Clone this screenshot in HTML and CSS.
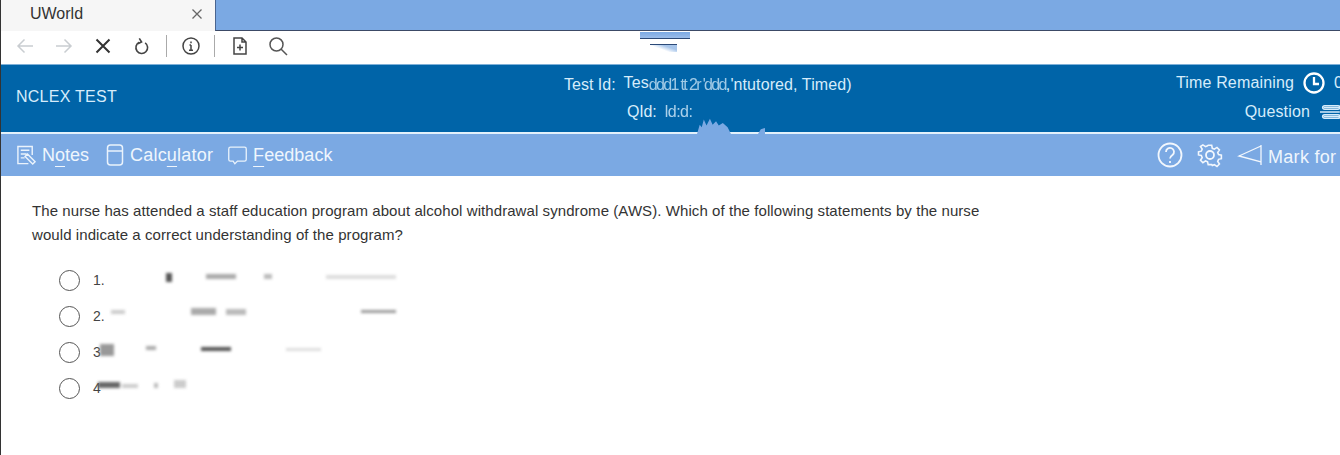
FILE: index.html
```html
<!DOCTYPE html>
<html lang="en">
<head>
<meta charset="utf-8">
<title>UWorld</title>
<link rel="stylesheet" href="styles.css">
</head>
<body>
<div class="tabstrip">
  <div class="tab"><span class="tab-title">UWorld</span>
    <svg class="tab-close" viewBox="0 0 12 12"><path d="M1.5 1.5l9 9M10.5 1.5l-9 9"/></svg>
  </div>
  <div class="tab-rest"></div>
</div>
<div class="toolbar">
  <svg class="tb tb-dim" viewBox="0 0 20 20"><path d="M18 10H3M9.500 3.500L3 10l6.500 6.500"/></svg>
  <svg class="tb tb-dim" viewBox="0 0 20 20"><path d="M2 10h15M10.500 3.500L17 10l-6.500 6.500"/></svg>
  <svg class="tb tb-x" viewBox="0 0 20 20"><path d="M3.500 3.500l13 13M16.500 3.500l-13 13"/></svg>
  <svg class="tb tb-reload" viewBox="0 0 20 20"><path d="M13.500 6.500a6.500 6.500 0 1 1-6.500-.6M7 1.500l2.500 4-4 2"/></svg>
  <span class="tb-sep"></span>
  <svg class="tb tb-info" viewBox="0 0 20 20"><circle cx="10" cy="10" r="8"/><path d="M10 9v5M8 14.200h4M8.500 9h1.500M10 5.500v1.800"/></svg>
  <span class="tb-sep sep2"></span>
  <svg class="tb tb-page" viewBox="0 0 20 20"><path d="M4 2h8l4 4v12H4zM12 2v4h4M10 8.500v6M7 11.500h6"/></svg>
  <svg class="tb tb-search" viewBox="0 0 20 20"><circle cx="8.500" cy="8.500" r="6.500"/><path d="M13 13l6 6"/></svg>
  <div class="tb-smudge"><span class="sm-a"></span><span class="sm-b"></span></div>
</div>
<header class="head">
  <div class="head-left">NCLEX TEST</div>
  <div class="head-center">
    <div class="test-line"><span>Test Id:</span><span class="test-val"><span class="tes">Tes</span><span class="garble">ddd1 tt 2r 'ddd</span>,'ntutored, Timed)</span></div>
    <div class="qid-line">QId: <span class="qid-val">ld:d:</span></div>
  </div>
  <div class="head-right">
    <div class="right-line">Time Remaining
      <svg class="clock" viewBox="0 0 24 24"><circle cx="12" cy="12" r="9.500"/><path d="M12 6v7h5"/></svg>
      <span class="clip">0</span>
    </div>
    <div class="right-line q">Question
      <svg class="qicon" viewBox="0 0 24 20"><path d="M6 5h18M2 10h22M6 15h18"/><rect x="5" y="3" width="19" height="4" rx="2"/><rect x="5" y="13" width="19" height="4" rx="2"/></svg>
    </div>
  </div>
  <span class="blob blob-a"></span>
  <span class="blob blob-b"></span>
</header>
<nav class="nav">
  <div class="nav-left">
    <a class="nav-item">
      <svg class="ni ni-notes" viewBox="0 0 22 24"><path d="M13 21H2V3h15v9M5 7h9M5 11h6M5 15h4M12 11l8 8-2.500 2.500-8-8z"/></svg>
      <span>N<u>o</u>tes</span></a>
    <a class="nav-item">
      <svg class="ni ni-calc" viewBox="0 0 18 24"><rect x="1.500" y="2" width="15" height="20" rx="3"/><path d="M1.500 8h15"/></svg>
      <span class="calc-label">Calc<u>u</u>lator</span></a>
    <a class="nav-item">
      <svg class="ni ni-wide" viewBox="0 0 24 24"><path d="M4 3h16a2 2 0 0 1 2 2v12a2 2 0 0 1-2 2H12l-3 3-2-3H4a2 2 0 0 1-2-2V5a2 2 0 0 1 2-2z"/></svg>
      <span class="fb-label"><u>F</u>eedback</span></a>
  </div>
  <div class="nav-right">
    <svg class="nr help" viewBox="0 0 26 26"><circle cx="13" cy="13" r="11.500"/><path d="M9 10a4 4 0 1 1 6.500 3c-1.500 1.100-2.500 1.800-2.500 3.500M13 19v2"/></svg>
    <svg class="nr gear" viewBox="0 0 26 26"><circle cx="13" cy="13" r="4"/><path d="M11 2h4l.7 3.500 2.300 1 3-2 2.800 2.800-2 3 1 2.300 3.200.7v4l-3.200.7-1 2.300 2 3-2.800 2.800-3-2-2.300 1L15 24h-4l-.7-3.200-2.300-1-3 2-2.800-2.800 2-3-1-2.300L0 13v-3.600l3.200-.7 1-2.300-2-3L5 1.600l3 2 2.300-1z" transform="translate(1.500 1.500) scale(.88)"/></svg>
    <svg class="nr flag" viewBox="0 0 26 22"><path d="M24 2L2 12l22 6zM24 1v20"/></svg>
    <span class="mark"><u>M</u>ark for</span>
  </div>
</nav>
<main class="content">
  <p class="question">The nurse has attended a staff education program about alcohol withdrawal syndrome (AWS). Which of the following statements by the nurse<br>would indicate a correct understanding of the program?</p>
  <ul class="options">
    <li class="opt"><span class="radio"></span><span>1.</span><span class="smudge s1"></span></li>
    <li class="opt"><span class="radio"></span><span>2.</span><span class="smudge s2"></span></li>
    <li class="opt"><span class="radio"></span><span>3</span><span class="smudge s3"></span></li>
    <li class="opt"><span class="radio"></span><span>4</span><span class="smudge s4"></span></li>
  </ul>
</main>
</body>
</html>
```
FILE: styles.css
```css
* { box-sizing: border-box; }
html, body { margin: 0; height: 100%; }
body {
  width: 1340px; height: 455px; overflow: hidden; background: #fff;
  font-family: "Liberation Sans", Arial, sans-serif; color: #333;
  border-left: 1px solid #333;
}
.tabstrip { display: flex; height: 31px; }
.tab {
  width: 214px; display: flex; align-items: center; justify-content: space-between;
  background: #f6f6f6; padding: 0 12px 3px 29px; font-size: 16px; color: #333;
}
.tab-close { width: 12px; height: 12px; fill: none; stroke: #666; stroke-width: 1.300; }
.tab-rest { flex: 1; background: #7ba9e3; border-bottom: 1px solid #3c4a66; border-left: 1px solid #4a6590; }
.toolbar { display: flex; align-items: center; height: 34px; background: #fff; padding: 0 0 3px 14px; position: relative; border-bottom: 1px solid #7eb0d8; }
.tb { width: 20px; height: 20px; fill: none; stroke-width: 1.500; flex: none; }
.tb-dim { stroke: #c9cdd1; margin-right: 19px; }
.tb-x { stroke: #333; stroke-width: 2; margin-right: 20px; }
.tb-reload { stroke: #444; stroke-width: 1.800; width: 18px; height: 18px; margin-right: 15px; }
.tb-sep { width: 1px; height: 22px; background: #aaa; margin-right: 14px; flex: none; }
.tb-info { stroke: #444; margin-right: 13px; }
.sep2 { margin-right: 15px; }
.tb-page { stroke: #444; margin-right: 18px; }
.tb-search { stroke: #555; }
.tb-smudge { margin-left: 352px; width: 50px; display: flex; flex-direction: column; align-items: center; gap: 5px; align-self: flex-start; padding-top: 1px; }
.sm-a { width: 50px; height: 7px; background: linear-gradient(#7ba9e3, #9bbdea); border-bottom: 1px solid #2c4a78; filter: blur(.5px); }
.sm-b { width: 27px; height: 8px; margin-left: -3px; border-top: 1px solid #2c4a78; background: linear-gradient(200deg, #a7c5ea 30%, transparent 60%); filter: blur(.5px); }
.head {
  height: 67px; background: #0064a8; color: #d6ecfb; display: flex; position: relative;
  justify-content: space-between; font-size: 16px;
}
.head-left { width: 563px; padding: 23px 0 0 15px; letter-spacing: .25px; }
.head-center { flex: 1; padding-top: 10px; }
.test-line { display: flex; gap: 8px; line-height: 20px; }
.test-val { letter-spacing: .1px; display: flex; white-space: pre; }
.tes { position: relative; top: -2px; }
.garble { opacity: .75; letter-spacing: -1.650px; }
.qid-line { margin: 7px 0 0 63px; line-height: 20px; letter-spacing: -.2px; }
.qid-val { opacity: .8; letter-spacing: -.5px; margin-left: 4px; }
.head-right { width: 164px; padding-top: 8px; display: flex; flex-direction: column; align-items: flex-end; overflow: hidden; flex: none; }
.right-line { display: flex; align-items: center; gap: 8px; height: 20px; white-space: nowrap; letter-spacing: .15px; }
.right-line.q { margin-top: 9px; gap: 8px; }
.clock { width: 24px; height: 24px; fill: none; stroke: #fff; stroke-width: 2.300; }
.clip { width: 6px; overflow: hidden; }
.qicon { width: 22px; height: 18px; fill: none; stroke: #d6ecfb; stroke-width: 1.800; }
.blob { position: absolute; background: #7ba9e3; }
.blob-a { left: 696px; top: 52px; width: 34px; height: 17px; clip-path: polygon(0 100%, 8% 45%, 14% 60%, 20% 15%, 28% 50%, 38% 10%, 46% 45%, 56% 25%, 64% 50%, 76% 35%, 90% 60%, 100% 100%); }
.blob-b { left: 757px; top: 63px; width: 7px; height: 6px; clip-path: polygon(0 100%, 40% 20%, 100% 0, 100% 100%); }
.nav {
  height: 44px; background: #7ba9e3; border-top: 2px solid #e3f1fb; color: #eff6fd;
  display: flex; justify-content: space-between; align-items: center; font-size: 18px;
}
.nav-left { display: flex; gap: 16px; padding-left: 15px; }
.nav-item { display: flex; align-items: center; gap: 5px; }
.ni { height: 24px; fill: none; stroke: #eaf3fc; stroke-width: 1.500; }
.ni-notes { width: 21px; }
.ni-calc { width: 18px; margin-left: 1px; }
.ni-wide { width: 21px; margin-left: -2px; }
.calc-label { margin-left: 1px; letter-spacing: .2px; }
.fb-label { letter-spacing: .05px; }
u { text-underline-offset: 5px; text-decoration-thickness: 1px; }
.nav-right { display: flex; align-items: center; flex: none; width: 183px; overflow: hidden; white-space: nowrap; }
.nr { fill: none; stroke: #f2f7fd; stroke-width: 1.800; flex: none; }
.help { width: 26px; height: 26px; margin-right: 14px; }
.gear { width: 26px; height: 26px; margin-right: 14px; }
.flag { width: 26px; height: 22px; margin-right: 5px; stroke-width: 1.300; }
.mark { padding-top: 4px; letter-spacing: .3px; }
.content { padding: 23px 0 0 31px; }
.question { margin: 0; font-size: 15px; line-height: 24px; letter-spacing: .075px; color: #333; }
.options { list-style: none; margin: 15px 0 0; padding: 0 0 0 27px; }
.opt { display: flex; align-items: center; height: 36px; font-size: 14px; color: #444; }
.radio { width: 21px; height: 21px; border: 1.500px solid #555; border-radius: 50%; margin-right: 13px; background: #fff; flex: none; }
.smudge { width: 300px; height: 14px; background-repeat: no-repeat; filter: blur(1.400px); }
.s1 {
  margin: -4px 0 0 4px;
  background-image: linear-gradient(#555, #555), linear-gradient(#aaa, #aaa), linear-gradient(#bbb, #bbb), linear-gradient(#ddd, #ddd);
  background-size: 6px 9px, 30px 5px, 8px 5px, 70px 4px;
  background-position: 57px 2px, 97px 3px, 155px 3px, 217px 4px;
}
.s2 {
  margin: -8px 0 0 4px;
  background-image: linear-gradient(#ccc, #ccc), linear-gradient(#aaa, #aaa), linear-gradient(#bbb, #bbb), linear-gradient(#999, #999);
  background-size: 14px 4px, 25px 7px, 20px 6px, 35px 3px;
  background-position: 2px 5px, 82px 3px, 117px 4px, 252px 5px;
}
.s3 {
  margin: -6px 0 0 -1px;
  background-image: linear-gradient(#999, #999), linear-gradient(#aaa, #aaa), linear-gradient(#555, #555), linear-gradient(#ddd, #ddd);
  background-size: 14px 12px, 10px 4px, 30px 4px, 35px 3px;
  background-position: 0 2px, 46px 4px, 101px 5px, 186px 6px;
}
.s4 {
  margin: -6px 0 0 -3px;
  background-image: linear-gradient(#666, #666), linear-gradient(#ccc, #ccc), linear-gradient(#bbb, #bbb), linear-gradient(#ccc, #ccc);
  background-size: 22px 6px, 16px 4px, 4px 5px, 12px 8px;
  background-position: 0 4px, 24px 6px, 56px 5px, 76px 2px;
}
```
